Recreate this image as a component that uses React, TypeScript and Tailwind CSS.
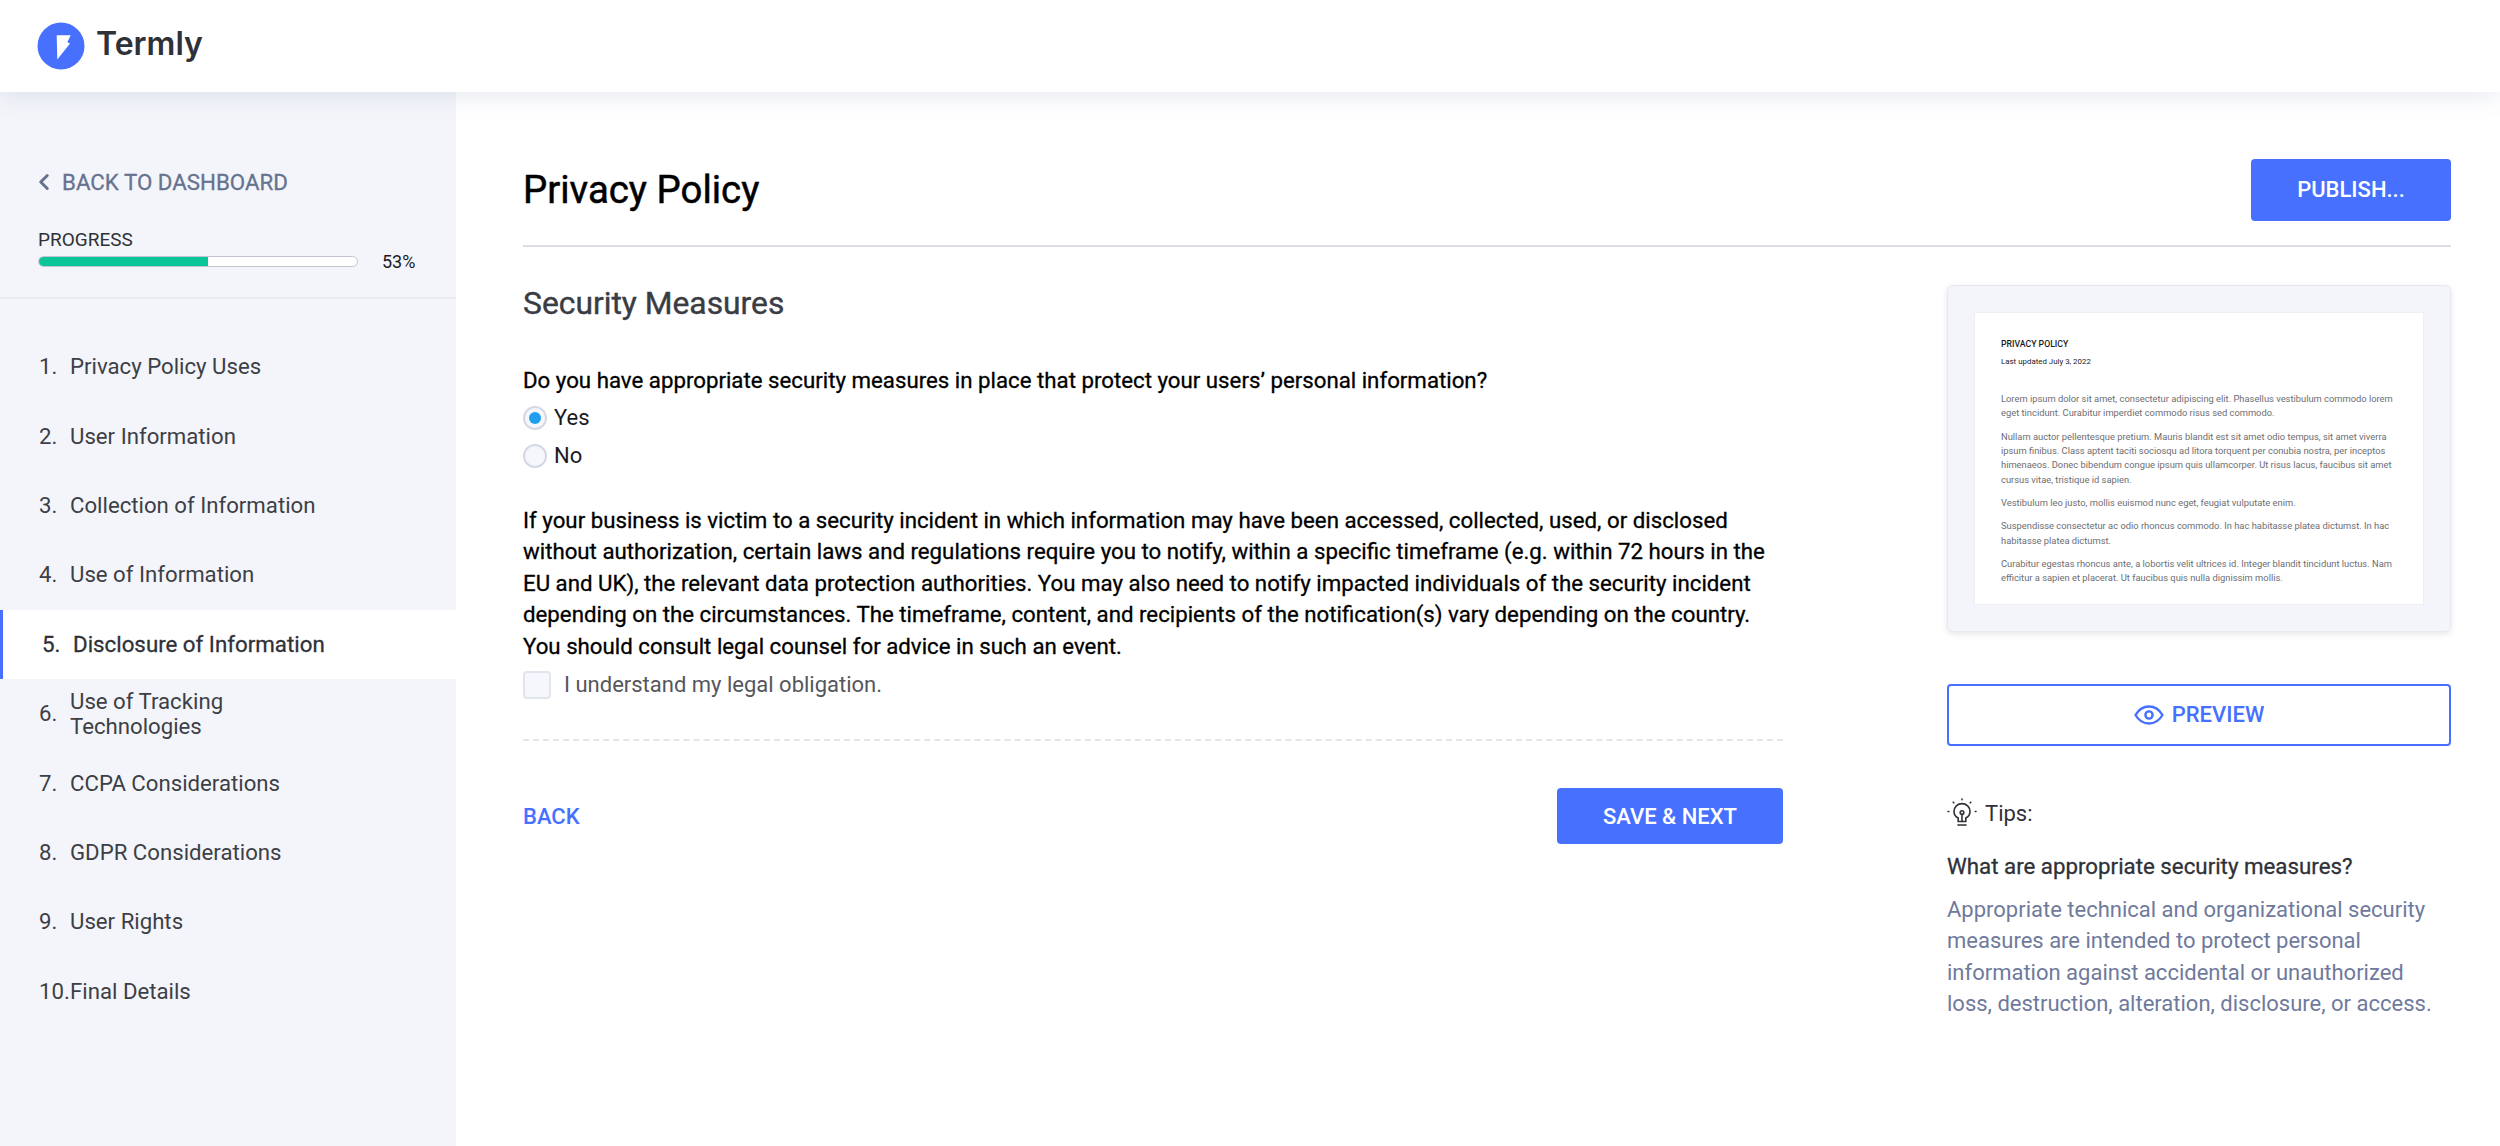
import { ChevronLeft } from 'lucide-react';

const steps = [
  'Privacy Policy Uses',
  'User Information',
  'Collection of Information',
  'Use of Information',
  'Disclosure of Information',
  'Use of Tracking Technologies',
  'CCPA Considerations',
  'GDPR Considerations',
  'User Rights',
  'Final Details',
];

const previewParagraphs = [
  'Lorem ipsum dolor sit amet, consectetur adipiscing elit. Phasellus vestibulum commodo lorem eget tincidunt. Curabitur imperdiet commodo risus sed commodo.',
  'Nullam auctor pellentesque pretium. Mauris blandit est sit amet odio tempus, sit amet viverra ipsum finibus. Class aptent taciti sociosqu ad litora torquent per conubia nostra, per inceptos himenaeos. Donec bibendum congue ipsum quis ullamcorper. Ut risus lacus, faucibus sit amet cursus vitae, tristique id sapien.',
  'Vestibulum leo justo, mollis euismod nunc eget, feugiat vulputate enim.',
  'Suspendisse consectetur ac odio rhoncus commodo. In hac habitasse platea dictumst. In hac habitasse platea dictumst.',
  'Curabitur egestas rhoncus ante, a lobortis velit ultrices id. Integer blandit tincidunt luctus. Nam efficitur a sapien et placerat. Ut faucibus quis nulla dignissim mollis.',
];

function Logo() {
  return (
    <svg width="48" height="48" viewBox="0 0 48 48">
      <circle cx="24" cy="24" r="23.5" fill="#4770ff" />
      <path d="M19.7 13.3 L33.7 13.3 L30.3 20.3 L33 21.5 L20.3 37.5 Z" fill="#fff" />
    </svg>
  );
}

function EyeIcon() {
  return (
    <svg width="30" height="22" viewBox="0 0 30 22" fill="none" stroke="#4770ff" strokeWidth="2.4" strokeLinejoin="round">
      <path d="M1.5 11 C5 5 9.5 2.5 15 2.5 C20.5 2.5 25 5 28.5 11 C25 17 20.5 19.5 15 19.5 C9.5 19.5 5 17 1.5 11 Z" />
      <circle cx="15" cy="11" r="3.6" />
    </svg>
  );
}

function BulbIcon() {
  return (
    <svg width="30" height="30" viewBox="0 0 30 30" fill="none" stroke="#2f3138" strokeWidth="1.6" strokeLinecap="round">
      <path d="M11.2 23.5 L11.2 20 C8.5 18.6 7 16.2 7 13.4 C7 9 10.6 5.6 15 5.6 C19.4 5.6 23 9 23 13.4 C23 16.2 21.5 18.6 18.8 20 L18.8 23.5 Z" />
      <circle cx="15" cy="14.5" r="1.8" />
      <path d="M15 16.5 L15 23.5" />
      <path d="M11 27 L19 27" />
      <path d="M15 1 L15 1.8 M6.2 4.2 L6.8 4.8 M23.8 4.2 L23.2 4.8 M1 13.5 L1.8 13.5 M28.2 13.5 L29 13.5" />
    </svg>
  );
}

export default function App() {
  return (
    <div className="flex h-screen flex-col overflow-hidden bg-white font-['Roboto',sans-serif]">
      <header className="relative z-10 flex h-[92px] shrink-0 items-center gap-[11px] bg-white pl-[37px] shadow-[0_4px_24px_rgba(71,90,150,0.13)]">
        <Logo />
        <span className="-mt-[4px] font-['Inter',sans-serif] text-[32px] font-semibold text-[#2f3138]">Termly</span>
      </header>

      <div className="flex flex-1">
        <aside className="w-[456px] shrink-0 bg-[#f4f5fa]">
          <div className="border-b-2 border-[#ebecf1] px-[38px] pb-[22px] pt-[77px]">
            <div className="flex items-center gap-[5px] text-[22.3px] leading-[26px] text-[#66738f] [-webkit-text-stroke:0.3px_currentColor]">
              <ChevronLeft size={26} strokeWidth={2.8} className="-ml-[7px]" />
              BACK TO DASHBOARD
            </div>
            <div className="mt-[34px] text-[19px] leading-[22px] text-[#2f3138]">PROGRESS</div>
            <div className="-mt-[3px] flex items-center gap-[24px]">
              <div className="h-[11px] w-[320px] overflow-hidden rounded-full border border-[#c2c5d0] bg-white">
                <div className="h-full w-[53%] bg-[#0bc598]" />
              </div>
              <span className="text-[18px] text-[#1b1b1f]">53%</span>
            </div>
          </div>

          <ol className="pt-[33px]">
            {steps.map((step, i) =>
              i === 4 ? (
                <li
                  key={step}
                  className="flex h-[69.4px] items-center border-l-[3px] border-[#4770ff] bg-white pl-[39px] text-[22.3px] text-[#2f3138] [-webkit-text-stroke:0.3px_currentColor]"
                >
                  <span className="w-[31px] shrink-0">{i + 1}.</span>
                  {step}
                </li>
              ) : (
                <li key={step} className="flex h-[69.4px] items-center pl-[39px] text-[22.2px] leading-[25px] text-[#3d3f46]">
                  <span className="w-[31px] shrink-0">{i + 1}.</span>
                  <span className="max-w-[262px]">{step}</span>
                </li>
              ),
            )}
          </ol>
        </aside>

        <main className="flex-1 pl-[67px] pr-[49px]">
          <div className="flex h-[155px] items-center justify-between border-b-2 border-[#dcdee4] pt-[42px]">
            <h1 className="text-[38.4px] text-black [-webkit-text-stroke:0.5px_currentColor]">Privacy Policy</h1>
            <button className="h-[62px] w-[200px] rounded-[4px] bg-[#4770ff] text-[22px] font-medium text-white">PUBLISH...</button>
          </div>

          <div className="flex justify-between">
            <section className="w-[1260px]">
              <h2 className="mt-[36px] text-[31.8px] leading-[40px] text-[#3a3c44] [-webkit-text-stroke:0.4px_currentColor]">Security Measures</h2>
              <p className="mt-[42px] text-[22.25px] leading-[31.5px] text-black [-webkit-text-stroke:0.3px_currentColor]">
                Do you have appropriate security measures in place that protect your users’ personal information?
              </p>
              <label className="mt-[2px] flex h-[38px] items-center gap-[7px] text-[22px] text-[#1b1b1f]">
                <span className="flex h-[24px] w-[24px] items-center justify-center rounded-full border-2 border-[#d5d8e3] bg-[#f6f7fc]">
                  <span className="h-[12px] w-[12px] rounded-full bg-[#1f9ff0]" />
                </span>
                Yes
              </label>
              <label className="flex h-[38px] items-center gap-[7px] text-[22px] text-[#1b1b1f]">
                <span className="h-[24px] w-[24px] rounded-full border-2 border-[#d5d8e3] bg-[#f6f7fc]" />
                No
              </label>
              <p className="mt-[30px] text-[22.25px] leading-[31.5px] text-black [-webkit-text-stroke:0.3px_currentColor]">
                If your business is victim to a security incident in which information may have been accessed, collected, used, or disclosed without authorization, certain laws and regulations require you to notify, within a specific timeframe (e.g. within 72 hours in the EU and UK), the relevant data protection authorities. You may also need to notify impacted individuals of the security incident depending on the circumstances. The timeframe, content, and recipients of the notification(s) vary depending on the country. You should consult legal counsel for advice in such an event.
              </p>
              <label className="mt-[6px] flex items-center gap-[13px] text-[22px] text-[#55565c]">
                <span className="h-[28px] w-[28px] rounded-[4px] border-2 border-[#e3e5ec] bg-[#f6f7fc]" />
                I understand my legal obligation.
              </label>
              <div className="mt-[38px] border-t-2 border-dashed border-[#e4e5e9]" />
              <div className="mt-[47px] flex items-center justify-between">
                <button className="text-[22px] font-medium text-[#4770ff]">BACK</button>
                <button className="h-[56px] w-[226px] rounded-[4px] bg-[#4770ff] text-[22px] font-medium text-white">SAVE &amp; NEXT</button>
              </div>
            </section>

            <aside className="w-[504px] pt-[38px]">
              <div className="rounded-[6px] border border-[#e8e9ee] bg-[#f4f5fa] p-[26px] shadow-[0_2px_6px_rgba(0,0,0,0.1)]">
                <div className="h-[293px] overflow-hidden border border-[#eeeff3] bg-white px-[26px] pt-[26px]">
                  <div className="text-[8.7px] font-medium leading-[11px] text-[#1b1b1f]">PRIVACY POLICY</div>
                  <div className="mt-[6px] text-[7.9px] leading-[11px] text-[#1b1b1f]">Last updated July 3, 2022</div>
                  <div className="mt-[25px] flex flex-col gap-[9.1px]">
                    {previewParagraphs.map((text) => (
                      <p key={text} className="text-[9.35px] leading-[14.3px] text-[#6d6e72]">{text}</p>
                    ))}
                  </div>
                </div>
              </div>

              <button className="mt-[51.5px] flex h-[62px] w-full items-center justify-center gap-[8px] rounded-[4px] border-2 border-[#4770ff] text-[22px] font-medium text-[#4770ff]">
                <EyeIcon />
                PREVIEW
              </button>

              <div className="mt-[51px] flex items-center gap-[8px] text-[22px] text-[#2f3138]">
                <BulbIcon />
                Tips:
              </div>
              <h3 className="mt-[20px] text-[22.3px] text-[#2f3138] [-webkit-text-stroke:0.3px_currentColor]">What are appropriate security measures?</h3>
              <p className="mt-[11px] text-[22px] leading-[31.5px] text-[#6f7a9c]">
                Appropriate technical and organizational security measures are intended to protect personal information against accidental or unauthorized loss, destruction, alteration, disclosure, or access.
              </p>
            </aside>
          </div>
        </main>
      </div>
    </div>
  );
}
